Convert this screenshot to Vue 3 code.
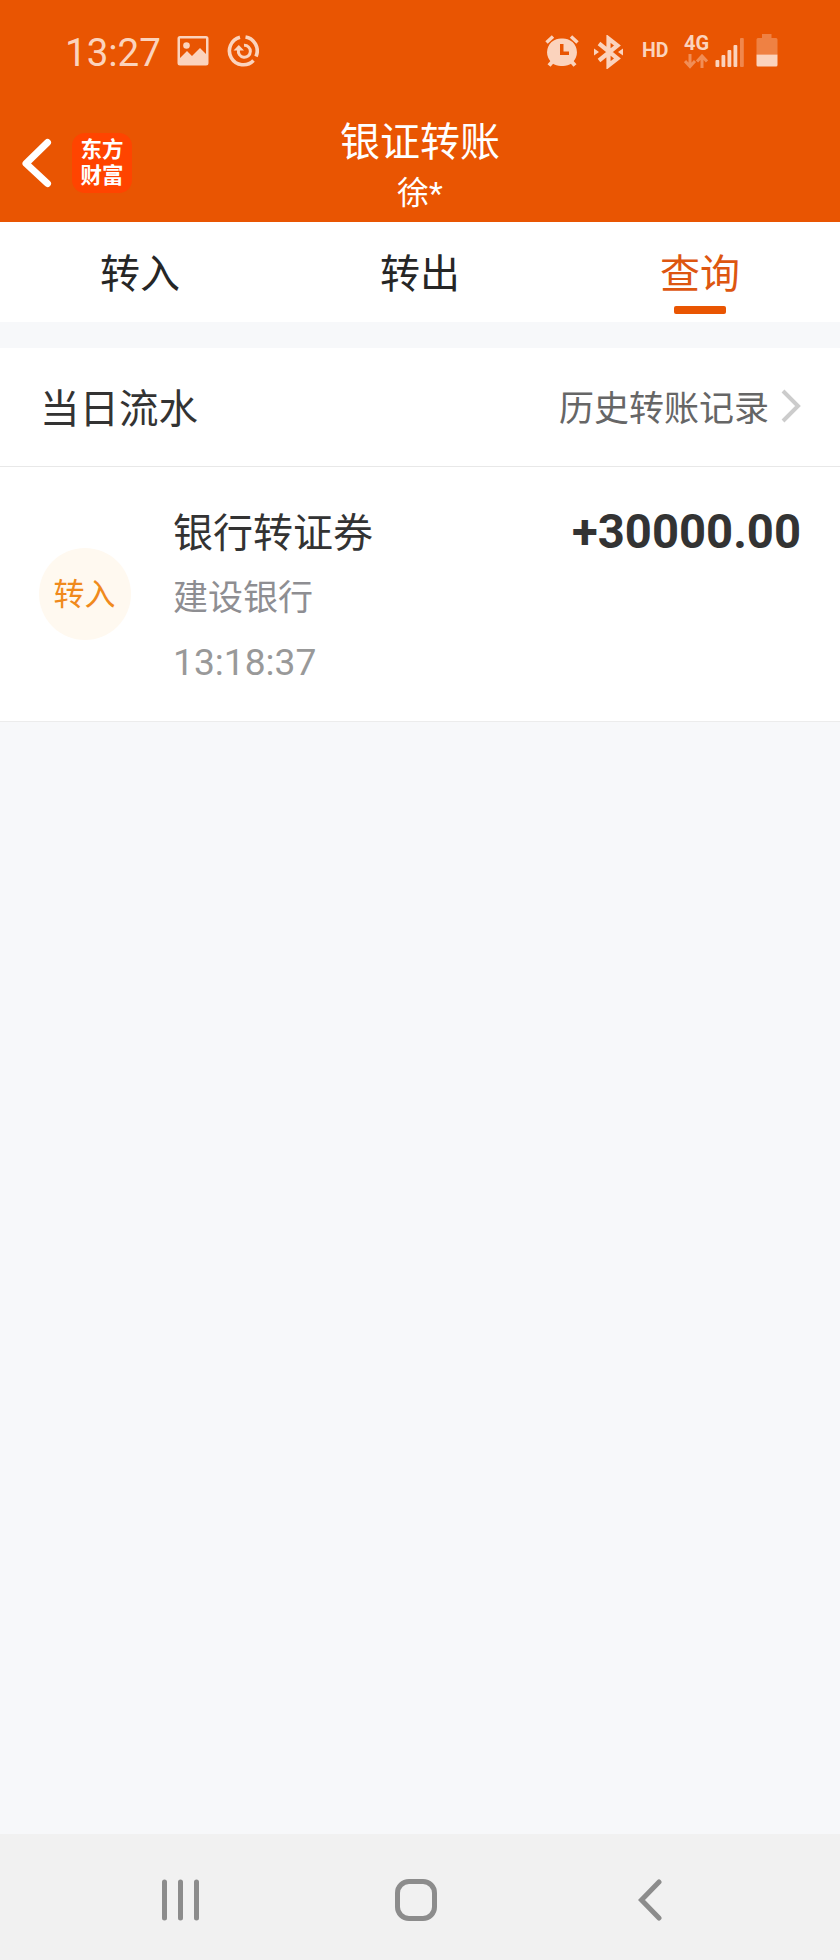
<template>
  <div class="page">
    <header class="header">
      <!-- Status Bar -->
      <div class="status-bar">
        <div class="status-left">
          <span class="clock">13:27</span>
          <svg class="icon-image" width="32" height="30" viewBox="0 0 32 30">
            <path fill-rule="evenodd" d="M3 0H29Q31.500 0 31.500 2.500V27Q31.500 29.500 29 29.500H3Q.5 29.500 .5 27V2.500Q.5 0 3 0ZM3 2.500V22L10 15L15 20L23 12L29 18V2.500Z" />
            <circle cx="9.500" cy="9.500" r="3.300" />
          </svg>
          <svg class="icon-sync" width="32" height="32" viewBox="0 0 32 32">
            <g fill="none" stroke="currentColor" stroke-width="3.600">
              <path d="M13 2.200A14 14 0 1 0 26.500 25.500" />
              <path d="M18.500 2A14 14 0 0 1 29 21.500" />
              <path d="M11.500 12.500V15A6 6 0 1 0 17 10.300" stroke-width="3" />
            </g>
            <path d="M6.500 15.500L11.800 10L17 15.500Z" />
          </svg>
        </div>
        <div class="status-right">
          <svg class="icon-alarm" width="34" height="32" viewBox="0 0 34 32">
            <g stroke="currentColor" stroke-width="4" fill="none">
              <path d="M1.500 7.500L8 1.500M26 1.500L32.500 7.500" stroke-width="3.500" />
              <path d="M8 26L4 30.500M26 26L30 30.500" />
            </g>
            <path fill-rule="evenodd" d="M17 3.500A13.800 13.800 0 1 1 17 31A13.800 13.800 0 1 1 17 3.500ZM15 9V20H24V16.500H18.500V9Z" />
          </svg>
          <svg class="icon-bluetooth" width="30" height="34" viewBox="0 0 30 34">
            <path d="M5 8.500L23.500 23.500L14.500 30.500V3.500L23.500 10.500L5 25.500" fill="none" stroke="currentColor" stroke-width="4.200" />
            <path d="M0 13.500L5 17L0 20.500ZM29 13.500L24 17L29 20.500Z" />
          </svg>
          <span class="hd">HD</span>
          <div class="network">
            <span class="network-type">4G</span>
            <svg width="24" height="15" viewBox="0 0 24 15">
              <path d="M6 0V12M1 7L6 12.500L11 7M18 14V2M13 7.500L18 2L23 7.500" fill="none" stroke="currentColor" stroke-width="3" />
            </svg>
          </div>
          <svg class="icon-signal" width="30" height="30" viewBox="0 0 30 30">
            <rect x="0.500" y="22" width="3.800" height="7" rx="1" />
            <rect x="6.500" y="17" width="3.800" height="12" rx="1" />
            <rect x="12.500" y="12" width="3.800" height="17" rx="1" />
            <rect x="18.500" y="7" width="3.800" height="22" rx="1" />
            <rect x="25" y="0" width="3.800" height="29" rx="1" opacity="0.400" />
          </svg>
          <svg class="icon-battery" width="22" height="33" viewBox="0 0 22 33">
            <path d="M6 0H15.500V4H20Q21.500 4 21.500 5.500V20.500H.5V5.500Q.5 4 2 4H6Z" opacity="0.350" />
            <path d="M.5 20.500H21.500V31Q21.500 32.500 20 32.500H2Q.5 32.500 .5 31Z" />
          </svg>
        </div>
      </div>

      <!-- Title Bar -->
      <div class="title-bar">
        <div class="title-left">
          <svg width="30" height="50" viewBox="0 0 30 50">
            <path d="M25.500 4.500L4 25.500L25.500 45.500" fill="none" stroke="#fff" stroke-width="7" stroke-linecap="round" stroke-linejoin="round" />
          </svg>
          <div class="logo">
            <span>东方</span>
            <span>财富</span>
          </div>
        </div>
        <div class="title">
          <h1>银证转账</h1>
          <p>徐*</p>
        </div>
      </div>
    </header>

    <nav class="tabs">
      <button
        v-for="tab in tabs"
        :key="tab"
        type="button"
        class="tab"
        :class="{ active: tab === activeTab }"
        @click="activeTab = tab"
      >
        {{ tab }}
      </button>
    </nav>

    <!-- Today's Records -->
    <section class="records">
      <div class="records-header">
        <h2>当日流水</h2>
        <div class="history">
          <span>历史转账记录</span>
          <svg width="20" height="34" viewBox="0 0 20 34">
            <path d="M2 2L17 17L2 32" fill="none" stroke="#ccc" stroke-width="4" />
          </svg>
        </div>
      </div>
      <div v-for="r in records" :key="r.time" class="record">
        <div class="badge">{{ r.type }}</div>
        <div class="record-info">
          <div class="record-name">{{ r.name }}</div>
          <div class="record-bank">{{ r.bank }}</div>
          <div class="record-time">{{ r.time }}</div>
        </div>
        <div class="amount">{{ r.amount }}</div>
      </div>
    </section>

    <!-- System Navigation -->
    <footer class="system-nav">
      <svg width="40" height="42" viewBox="0 0 40 42">
        <path d="M3.500 3V39M19.500 3V39M35.500 3V39" fill="none" stroke="#8c8c8c" stroke-width="5" stroke-linecap="round" />
      </svg>
      <svg width="42" height="42" viewBox="0 0 42 42">
        <rect x="2.500" y="2.500" width="37" height="37" rx="11.500" fill="none" stroke="#8c8c8c" stroke-width="5" />
      </svg>
      <svg width="24" height="42" viewBox="0 0 24 42">
        <path d="M21 3L3.500 21L21 39" fill="none" stroke="#8c8c8c" stroke-width="5" stroke-linecap="round" />
      </svg>
    </footer>
  </div>
</template>

<script setup>
import { ref } from 'vue'

const tabs = ['转入', '转出', '查询']
const activeTab = ref('查询')

const records = ref([
  { type: '转入', name: '银行转证券', bank: '建设银行', time: '13:18:37', amount: '+30000.00' }
])
</script>

<style>
body {
  margin: 0;
  background: #f7f8fa;
}
</style>

<style scoped>
.page {
  width: 840px;
  height: 1960px;
  display: flex;
  flex-direction: column;
  background: #f7f8fa;
  font-family: Roboto, "Noto Sans CJK SC", sans-serif;
  color: #333;
}

.page * {
  box-sizing: border-box;
}

svg {
  display: block;
  flex: none;
  fill: currentColor;
}

h1,
h2,
p {
  margin: 0;
  font-weight: 400;
}

.header {
  height: 222px;
  background: #e95502;
  color: #fff;
}

.status-bar {
  height: 102px;
  padding: 0 62px 0 64px;
  display: flex;
  justify-content: space-between;
  color: #fbd3bd;
}

.status-left,
.status-right {
  display: flex;
  align-items: flex-start;
}

.clock {
  margin-top: 30px;
  padding-left: 1px;
  font-size: 38.5px;
  line-height: 45px;
  width: 96px;
}

.icon-image {
  margin: 36px 0 0 17px;
}

.icon-sync {
  margin: 35px 0 0 18px;
}

.icon-alarm {
  margin-top: 35px;
}

.icon-bluetooth {
  margin: 35px 0 0 15px;
}

.hd {
  width: 28px;
  margin: 40px 0 0 18px;
  font-size: 19.5px;
  line-height: 22px;
  font-weight: 700;
}

.network {
  width: 25px;
  margin: 32px 0 0 14px;
}

.network-type {
  display: block;
  height: 22px;
  font-size: 20px;
  line-height: 23px;
  font-weight: 700;
}

.network svg {
  opacity: 0.45;
}

.icon-signal {
  margin: 38px 0 0 6px;
}

.icon-battery {
  margin: 34px 0 0 11px;
}

.title-bar {
  height: 120px;
  display: grid;
  grid-template-columns: 140px 1fr 140px;
}

.title-left {
  display: flex;
  align-items: flex-start;
  padding: 31px 0 0 22px;
}

.title-left svg {
  margin-top: 5px;
}

.logo {
  width: 60px;
  height: 60px;
  margin-left: 20px;
  padding-top: 4px;
  border-radius: 13px;
  background: #ff4400;
  text-align: center;
  font-size: 21.5px;
  line-height: 25.5px;
  font-weight: 700;
}

.logo span {
  display: block;
}

.title {
  text-align: center;
}

.title h1 {
  padding-top: 16px;
  font-size: 40px;
  line-height: 50px;
}

.title p {
  font-size: 32px;
  line-height: 50px;
}

.tabs {
  height: 100px;
  display: grid;
  grid-template-columns: repeat(3, 1fr);
  background: #fff;
}

.tab {
  display: flex;
  flex-direction: column;
  align-items: center;
  padding: 24px 0 0;
  border: 0;
  background: none;
  font-family: inherit;
  font-size: 40px;
  line-height: 58px;
  color: #262626;
}

.tab.active {
  color: #dd5610;
}

.tab.active::after {
  content: "";
  width: 52px;
  height: 8px;
  margin-top: 2px;
  border-radius: 2px;
  background: #e95502;
}

.records {
  margin-top: 26px;
  background: #fff;
}

.records-header {
  height: 119px;
  padding: 0 39px 3px 40px;
  display: flex;
  align-items: center;
  justify-content: space-between;
  border-bottom: 1px solid #e8e8e8;
}

.records-header h2 {
  font-size: 39.5px;
}

.history {
  display: flex;
  align-items: center;
  gap: 12px;
  font-size: 35px;
  color: #666;
}

.record {
  height: 255px;
  padding: 0 39px;
  display: flex;
  border-bottom: 1px solid #ececec;
}

.badge {
  width: 92px;
  height: 92px;
  margin-top: 81px;
  border-radius: 50%;
  background: #fff9f0;
  color: #f08a1c;
  font-size: 31px;
  line-height: 93px;
  text-align: center;
  text-indent: -1px;
}

.record-info {
  flex: 1;
  padding: 36px 0 0 42px;
}

.record-name {
  font-size: 40px;
  line-height: 62px;
}

.record-bank {
  font-size: 35px;
  line-height: 68px;
  color: #8e8e92;
}

.record-time {
  font-size: 37.2px;
  line-height: 59px;
  color: #999;
}

.amount {
  padding-top: 34px;
  font-size: 47.200px;
  line-height: 62px;
  font-weight: 700;
}

.system-nav {
  height: 126px;
  margin-top: auto;
  padding: 5px 178px 0 161px;
  display: flex;
  align-items: center;
  justify-content: space-between;
  background: #f1f1f1;
}

.system-nav svg:nth-child(2) {
  margin-right: 8px;
}
</style>
